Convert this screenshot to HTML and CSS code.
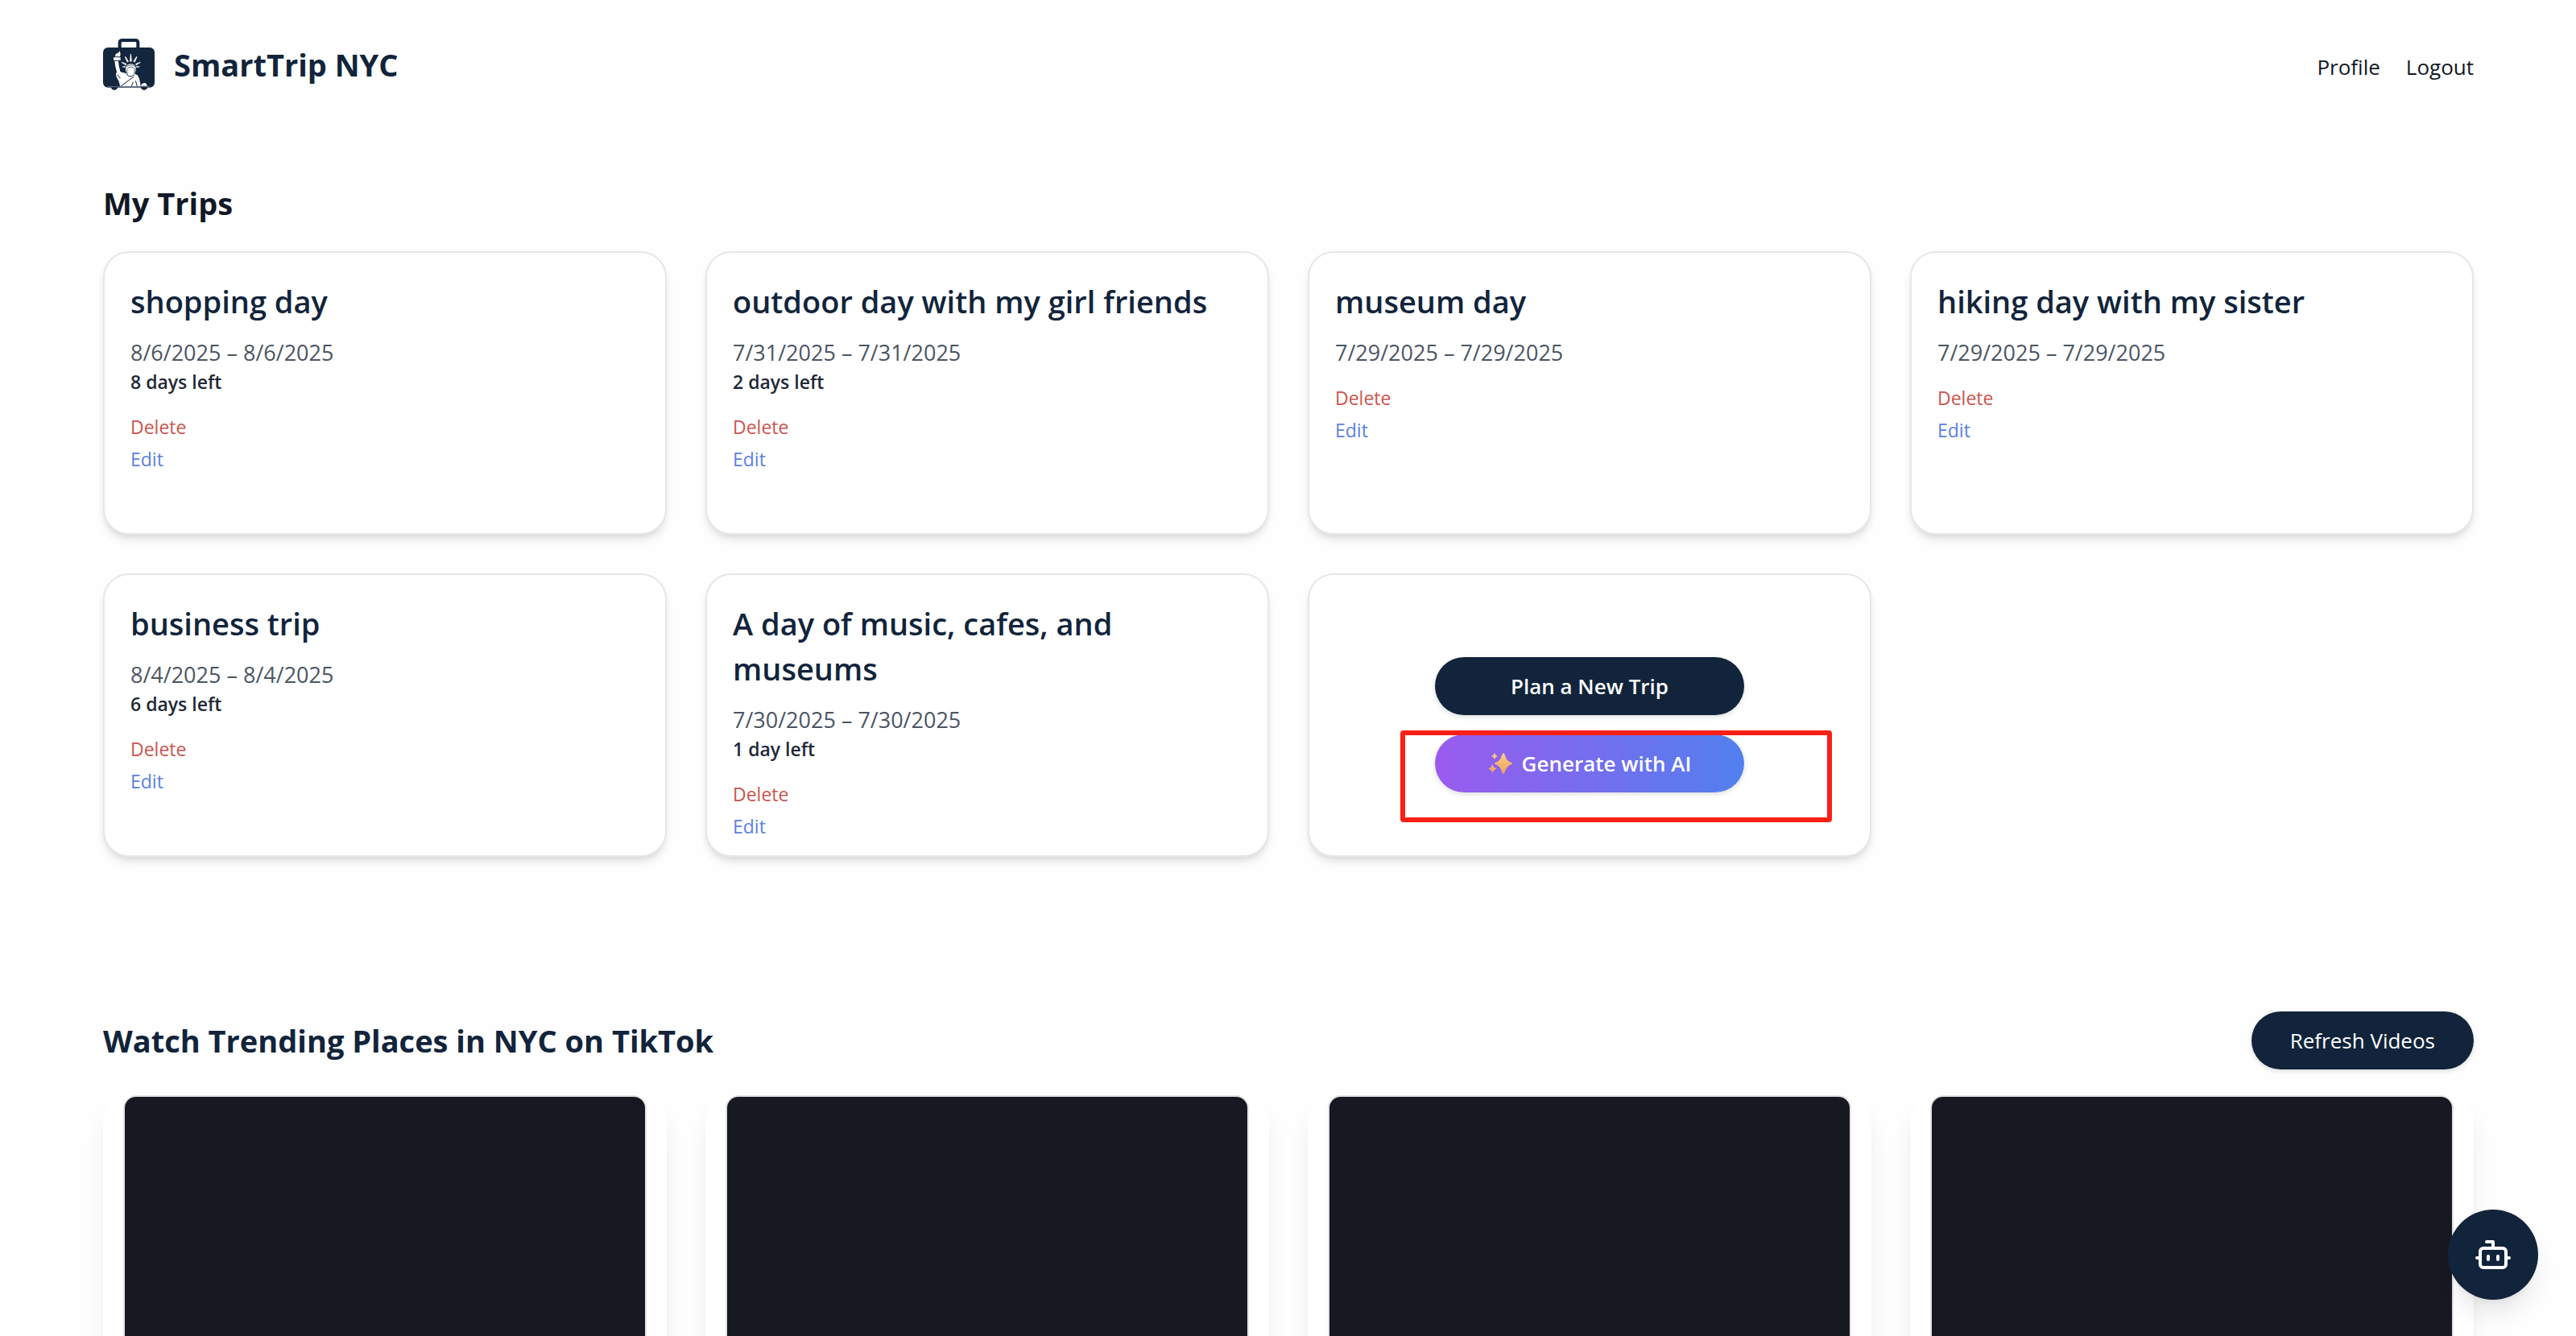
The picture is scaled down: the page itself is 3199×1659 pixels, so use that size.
FILE: index.html
```html
<!DOCTYPE html>
<html lang="en">
<head>
<meta charset="utf-8">
<meta name="viewport" content="width=device-width, initial-scale=1">
<title>SmartTrip NYC</title>
<link rel="stylesheet" href="styles.css">
</head>
<body>
<header class="site-header">
  <a class="brand" href="#">
    <svg class="brand-logo" viewBox="24 24 192 192" aria-hidden="true">
      <path d="M86 60V40q0-10 10-10h48q10 0 10 10v20" fill="none" stroke="#12263d" stroke-width="12"/>
      <rect x="24" y="57" width="192" height="149" rx="18" fill="#12263d"/>
      <path d="M54 204h24v4q-3 8-12 8t-12-8zM165 204h24v4q-3 8-12 8t-12-8z" fill="#12263d"/>
      <g transform="translate(54 54)">
        <path d="M15 37q-1-9 8-13 8-3 9-9 5 11 1 22zM9 40h26v10H9z" fill="#fff"/>
        <path d="M13 53h14l2 18 5 21q6 5 15 5l8 4v-6q-4-4-3-14 0-15 19-17 20 2 19 17 1 10-3 14v7l9 4q9 12 12 42H33q-2-20-13-34l-2-13 3-7q-6-20-8-41z" fill="#fff"/>
        <path d="M54 76q19-16 38 0M60 80q-3 12 2 22M87 80q3 12-2 22M62 79q11-8 23 0" fill="none" stroke="#12263d" stroke-width="2"/>
        <path d="M57 102q14 16 30 2M36 147l48-35M76 147l6-16M97 147l-6-20M24 104l10 14" fill="none" stroke="#12263d" stroke-width="3"/>
        <path d="M72 27h2l3 28h-7zM51 38l3-1 11 18-5 3zM97 38l-3-1-11 18 5 3zM39 59l1-2 17 7-2 5zM109 59l-1-2-17 7 2 5zM41 75l12-3-1 5zM107 75l-13-3 1 5z" fill="#fff" stroke="#fff"/>
        <path d="M111 146q1-9 8-9 2-4 8-2 6 3 8 11z" fill="#fff"/>
      </g>
      <path d="M40 203h160" stroke="#8b97a5" stroke-width="2"/>
    </svg>
    <span class="brand-name">SmartTrip NYC</span>
  </a>
  <nav class="site-nav">
    <a href="#">Profile</a>
    <a href="#">Logout</a>
  </nav>
</header>

<main>
  <section class="trips">
    <h1 class="trips-heading">My Trips</h1>
    <div class="grid">
      <article class="card">
        <h2 class="card-title">shopping day</h2>
        <p class="card-dates">8/6/2025 – 8/6/2025</p>
        <p class="card-left">8 days left</p>
        <div class="card-actions"><button class="delete" type="button">Delete</button><button class="edit" type="button">Edit</button></div>
      </article>
      <article class="card">
        <h2 class="card-title">outdoor day with my girl friends</h2>
        <p class="card-dates">7/31/2025 – 7/31/2025</p>
        <p class="card-left">2 days left</p>
        <div class="card-actions"><button class="delete" type="button">Delete</button><button class="edit" type="button">Edit</button></div>
      </article>
      <article class="card">
        <h2 class="card-title">museum day</h2>
        <p class="card-dates">7/29/2025 – 7/29/2025</p>
        <div class="card-actions"><button class="delete" type="button">Delete</button><button class="edit" type="button">Edit</button></div>
      </article>
      <article class="card">
        <h2 class="card-title">hiking day with my sister</h2>
        <p class="card-dates">7/29/2025 – 7/29/2025</p>
        <div class="card-actions"><button class="delete" type="button">Delete</button><button class="edit" type="button">Edit</button></div>
      </article>
      <article class="card">
        <h2 class="card-title">business trip</h2>
        <p class="card-dates">8/4/2025 – 8/4/2025</p>
        <p class="card-left">6 days left</p>
        <div class="card-actions"><button class="delete" type="button">Delete</button><button class="edit" type="button">Edit</button></div>
      </article>
      <article class="card">
        <h2 class="card-title">A day of music, cafes, and museums</h2>
        <p class="card-dates">7/30/2025 – 7/30/2025</p>
        <p class="card-left">1 day left</p>
        <div class="card-actions"><button class="delete" type="button">Delete</button><button class="edit" type="button">Edit</button></div>
      </article>
      <div class="card card-new">
        <button class="pill pill-wide" type="button">Plan a New Trip</button>
        <button class="pill pill-wide pill-ai" type="button">
          <svg class="sparkles" viewBox="0 0 30 28" aria-hidden="true">
            <defs><linearGradient id="gold" x1="0" y1="0" x2="0" y2="1"><stop offset="0" stop-color="#fbd07c"/><stop offset="1" stop-color="#eda062"/></linearGradient></defs>
            <path fill="url(#gold)" d="M19 1q1 0 2 3 2 7 7 8.500 2 .5 2 1.500t-2 1.500q-5 2-7 8.500-1 3-2 3t-2-3q-2-6.500-7-8.500-2-.5-2-1.500t2-1.500q5-1.500 7-8.500 1-3 2-3z"/>
            <path fill="url(#gold)" d="M8 1q1 3 4 4-3 1-4 4-1-3-4-4 3-1 4-4zM5.500 15q1 4 5 5.500-4 1.500-5 5.500-1-4-5-5.500 4-1.500 5-5.500z"/>
          </svg>
          Generate with AI
        </button>
        <div class="highlight"></div>
      </div>
    </div>
  </section>

  <section class="videos">
    <div class="videos-head">
      <h2 class="videos-heading">Watch Trending Places in NYC on TikTok</h2>
      <button class="pill pill-refresh" type="button">Refresh Videos</button>
    </div>
    <div class="grid">
      <div class="video-card"><div class="player"></div></div>
      <div class="video-card"><div class="player"></div></div>
      <div class="video-card"><div class="player"></div></div>
      <div class="video-card"><div class="player"></div></div>
    </div>
  </section>
</main>

<button class="chat-button" type="button" aria-label="Chat assistant">
  <svg viewBox="0 0 24 24" width="48" height="48" fill="none" stroke="currentColor" stroke-width="2" stroke-linecap="round" stroke-linejoin="round" aria-hidden="true">
    <path d="M12 8V4H8"/><rect width="16" height="12" x="4" y="8" rx="2"/><path d="M2 14h2M20 14h2M15 13v2M9 13v2"/>
  </svg>
</button>
</body>
</html>
```
FILE: styles.css
```css
* {
  box-sizing: border-box;
}

html {
  scrollbar-width: none;
}

body {
  margin: 0;
  background: #fefefe;
  color: #111827;
  font-family: "Segoe UI", "Open Sans", "Noto Sans", sans-serif;
  font-size: 27px;
  line-height: 40px;
}

h1,
h2,
p {
  margin: 0;
}

button {
  border: 0;
  padding: 0;
  background: none;
  font: inherit;
  cursor: pointer;
}

a {
  color: inherit;
  text-decoration: none;
}

.site-header {
  display: flex;
  align-items: center;
  justify-content: space-between;
  padding: 48px 127px 48px 128px;
}

.brand {
  display: flex;
  align-items: center;
  gap: 24px;
  color: #11243b;
}

.brand-logo {
  width: 64px;
  height: 64px;
}

.brand-name,
.trips-heading,
.videos-heading {
  font-size: 38px;
  font-weight: 700;
  line-height: 56px;
}

.site-nav {
  display: flex;
  gap: 32px;
  padding-top: 6px;
  font-size: 26px;
}

.trips {
  padding: 64px 127px 64px 128px;
}

.trips-heading {
  margin-bottom: 32px;
}

.grid {
  display: grid;
  grid-template-columns: repeat(4, 1fr);
  gap: 48px;
}

.card {
  position: relative;
  min-height: 352px;
  padding: 32px 32px 0;
  border: 2px solid #e5e7eb;
  border-radius: 32px;
  background: #fff;
  box-shadow: 0 8px 12px -2px rgb(0 0 0 / 10%), 0 4px 8px -4px rgb(0 0 0 / 10%);
}

.card-title {
  color: #11243b;
  font-size: 38px;
  font-weight: 600;
  line-height: 56px;
}

.card-dates {
  margin-top: 16px;
  color: #4b5563;
}

.card-left {
  color: #1f2937;
  font-size: 23px;
  font-weight: 600;
  line-height: 32px;
}

.card-actions {
  display: flex;
  flex-direction: column;
  align-items: flex-start;
  gap: 8px;
  margin-top: 24px;
  font-size: 23px;
  line-height: 32px;
}

.card-dates + .card-actions {
  margin-top: 20px;
}

.delete {
  color: #cb5550;
}

.edit {
  color: #5b82e0;
}

.card-new {
  display: flex;
  flex-direction: column;
  align-items: center;
  justify-content: center;
  gap: 24px;
  padding-top: 24px;
}

.pill {
  display: flex;
  align-items: center;
  justify-content: center;
  padding: 16px 48px;
  border-radius: 36px;
  background: #11243b;
  color: #fff;
  font-size: 26px;
  box-shadow: 0 2px 6px rgb(0 0 0 / 14%);
}

.pill-wide {
  width: 384px;
  font-weight: 600;
}

.pill-ai {
  gap: 12px;
  background: linear-gradient(to right, #9a5bee, #5180ee);
}

.sparkles {
  width: 30px;
  height: 28px;
}

.highlight {
  position: absolute;
  top: 193px;
  right: 47px;
  left: 113px;
  height: 114px;
  border: 6px solid #fb2016;
  border-radius: 4px;
  pointer-events: none;
}

.videos {
  padding: 128px 127px 64px 128px;
}

.videos-head {
  display: flex;
  align-items: center;
  justify-content: space-between;
  margin-bottom: 32px;
}

.videos-heading {
  color: #11243b;
}

.video-card {
  border-radius: 32px;
  background: #fff;
  box-shadow: 0 20px 30px -6px rgb(0 0 0 / 10%), 0 8px 12px -8px rgb(0 0 0 / 10%);
}

.player {
  max-width: 650px;
  height: 1140px;
  margin: 0 auto;
  border: 2px solid #e3e3e4;
  border-radius: 16px;
  background: #161921;
}

.chat-button {
  position: fixed;
  right: 47px;
  bottom: 45px;
  display: flex;
  align-items: center;
  justify-content: center;
  width: 112px;
  height: 112px;
  border-radius: 50%;
  background: #11243b;
  color: #fff;
  box-shadow: 0 20px 30px -6px rgb(0 0 0 / 10%), 0 8px 12px -8px rgb(0 0 0 / 10%);
}
```
